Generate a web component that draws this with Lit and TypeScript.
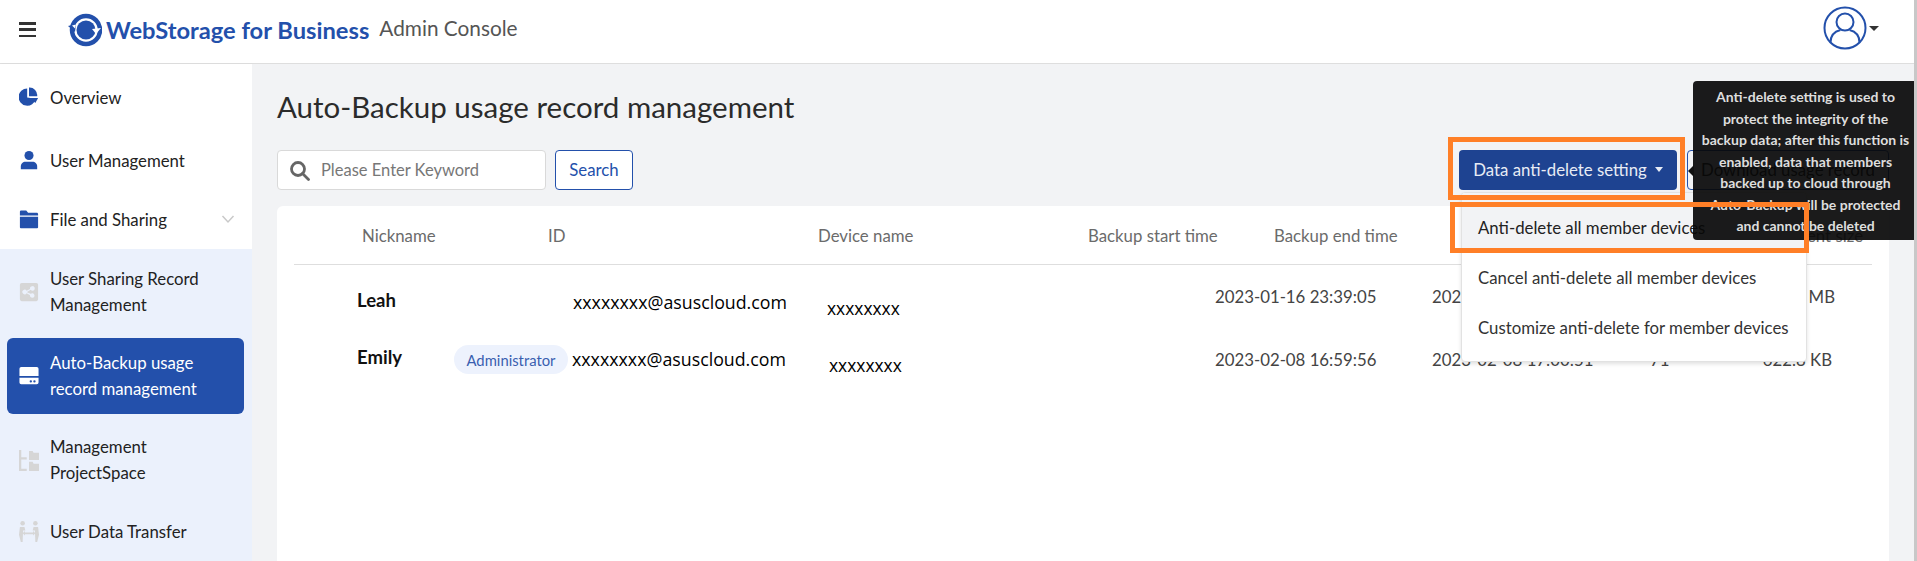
import { LitElement, html, css, svg } from "lit";
import { customElement } from "lit/decorators.js";

const icons: Record<string, any> = {
  pie: svg`<path d="M9 1.500a9.500 9.500 0 1 0 9.300 11.500L9 11.500z"/><path d="M11 0.500a8.500 8.500 0 0 1 9 9.500h-9z"/><path d="M12.500 12h8.500l-3 5.500z"/>`,
  user: svg`<circle cx="11" cy="6" r="5"/><path d="M2 21v-3c0-3 2.500-5 5-5h8c2.500 0 5 2 5 5v3z"/>`,
  folder: svg`<path d="M1 3C1 2 1.700 1.500 2.500 1.500h5.500l2 2.500h9.500c.9 0 1.500.6 1.500 1.500v1.500H1z"/><path d="M1 8.500h20V20c0 .8-.6 1.200-1.500 1.200h-17C1.600 21.200 1 20.800 1 20z"/>`,
  share: svg`<path fill-rule="evenodd" d="M3 1h16a2 2 0 0 1 2 2v16a2 2 0 0 1-2 2H3a2 2 0 0 1-2-2V3a2 2 0 0 1 2-2zm11.500 3.500a2.500 2.500 0 0 0-2.400 3.100L8.400 9.700a2.500 2.500 0 1 0 0 2.600l3.700 2.100a2.500 2.500 0 1 0 .8-1.400L9.200 11.400v-.8l3.700-2.100a2.500 2.500 0 1 0 1.600-4z"/>`,
  drive: svg`<path d="M2.500 1h17a2 2 0 0 1 2 2v8h-21V3a2 2 0 0 1 2-2z"/><path fill-rule="evenodd" d="M.5 13h21v5a2 2 0 0 1-2 2h-17a2 2 0 0 1-2-2zm12.500 2.500a1.300 1.300 0 1 0 0 2.600 1.300 1.300 0 0 0 0-2.600zm4 0a1.300 1.300 0 1 0 0 2.600 1.300 1.300 0 0 0 0-2.600z"/>`,
  tree: svg`<path d="M0 0h2.500v23H0zM2.500 8h6v2.500h-6zM2.500 20.500h6V23h-6z"/><path d="M11 1h4l1 2h6v8H11zM11 13h4l1 2h6v8H11z"/>`,
  transfer: svg`<circle cx="4" cy="2.500" r="2.500"/><circle cx="18" cy="2.500" r="2.500"/><path d="M1 6.500h5l1 4H4.500L4 23H2L0 15zM21 6.500h-5l-1 4h2.500L18 23h2l2-8z"/><path d="M6.500 11l-2.500 2.500L6.500 16v-1.500h9V16l2.500-2.500L15.500 11v1.500h-9z"/>`,
};

@customElement("nav-item")
class NavItem extends LitElement {
  static properties = { icon: {}, active: { type: Boolean, reflect: true }, muted: { type: Boolean, reflect: true }, caret: { type: Boolean } };
  icon = ""; active = false; muted = false; caret = false;
  static styles = css`
    :host { display: flex; align-items: center; box-sizing: border-box; color: #222; font: 16.800px/25.800px Lato, sans-serif; }
    .row { flex: 1; display: flex; align-items: center; gap: 11px; padding-left: 19px; box-sizing: border-box; }
    svg { width: 20px; height: 21px; flex: none; fill: #2350ab; }
    :host([muted]) svg { fill: #d6d6d6; }
    :host([active]) { color: #fff; background: #2350ab; border-radius: 6px; margin: 0 8px 0 7px; }
    :host([active]) .row { padding-left: 12px; }
    :host([active]) svg { fill: #fff; }
    .txt { flex: 1; }
    .chev { width: 14px; height: 14px; fill: none; stroke: #c9c9c9; stroke-width: 1.500; margin-right: 17px; }
  `;
  render() {
    return html`<div class="row"><svg viewBox="0 0 22 23">${icons[this.icon]}</svg><div class="txt"><slot></slot></div>${this.caret ? html`<svg class="chev" viewBox="0 0 14 14"><path d="M1.500 4l5.500 6 5.500-6"/></svg>` : ""}</div>`;
  }
}

@customElement("app-root")
class AppRoot extends LitElement {
  static styles = css`
    :host { display: block; width: 1917px; height: 561px; overflow: hidden; position: relative; background: #fff; font-family: Lato, sans-serif; color: #333; }
    header { height: 64px; box-sizing: border-box; display: flex; align-items: center; border-bottom: 1px solid #dedede; padding-left: 19px; }
    .burger { width: 17px; height: 15px; display: flex; flex-direction: column; justify-content: space-between; margin-right: 32px; margin-bottom: 4px; }
    .burger i { display: block; height: 2.500px; background: #333; }
    .logo { width: 34px; height: 34px; margin-right: 4px; margin-bottom: 3px; flex: none; }
    .brand { font: 700 23.700px "Lato", sans-serif; color: #2350ab; margin-right: 10px; margin-bottom: 4px; white-space: nowrap; }
    .console { font: 20.800px Lato, sans-serif; color: #555; padding-bottom: 9px; white-space: nowrap; }
    .account { margin-left: auto; margin-right: 38px; margin-bottom: 7px; display: flex; align-items: center; gap: 2px; }
    .account svg { width: 44px; height: 44px; display: block; }
    .caret { width: 0; height: 0; border: 4px solid transparent; border-top: 5px solid #333; border-bottom: 0; }
    .account .caret { border-left-width: 5px; border-right-width: 5px; }
    .body { display: flex; height: 497px; }
    aside { width: 252px; flex: none; background: #fff; display: flex; flex-direction: column; box-shadow: 1px 0 2px rgba(0,0,0,.03); }
    .top { display: grid; grid-template-rows: 68px 58px 59px; height: 185px; background: #fff; }
    .sub { flex: 1; background: #ebf1fc; display: grid; grid-template-rows: 89px 76px 92px 52px; align-content: start; }
    .sub nav-item:first-child { padding-bottom: 3px; }
    main { flex: 1; background: #f2f3f5; padding: 0 28px 0 25px; display: flex; flex-direction: column; min-width: 0; }
    h1 { margin: 23px 0 0; height: 40px; font: 400 29.500px/40px Lato, sans-serif; color: #2b2b2b; white-space: nowrap; }
    .tools { display: flex; align-items: center; margin-top: 23px; height: 40px; }
    .search { width: 269px; height: 40px; box-sizing: border-box; border: 1px solid #d9d9d9; border-radius: 4px; background: #fff; display: flex; align-items: center; padding: 0 0 1px 11px; gap: 11px; color: #777; font-size: 16.500px; }
    .search svg { width: 21px; height: 21px; fill: none; stroke: #666; stroke-width: 2.800; margin-top: 1px; }
    .btn { height: 40px; box-sizing: border-box; border-radius: 4px; font: 16.800px Lato, sans-serif; display: flex; align-items: center; justify-content: center; white-space: nowrap; padding-bottom: 2px; }
    .outline { border: 1px solid #2350ab; color: #2350ab; background: #fff; width: 78px; margin-left: 9px; }
    .primary { margin-left: auto; width: 218px; background: #1e4391; color: #e8ecf5; gap: 8px; }
    .primary .caret { border-top-color: #e8ecf5; }
    .dl { margin-left: 10px; width: 202px; border: 1px solid #2350ab; color: #222; background: transparent; }
    .card { flex: 1; margin-top: 16px; background: #fff; border-radius: 6px 6px 0 0; padding: 0 17px; position: relative; }
    .thead { height: 58px; display: grid; grid-template-columns: 186px 270px 270px 186px 1fr auto; padding-left: 68px; align-items: center; color: #6b6b6b; font-size: 16.800px; border-bottom: 1px solid #dedede; white-space: nowrap; }
    .thead .last { padding-right: 9px; }
    .trow { display: grid; grid-template-columns: 160px 119px 254px 388px 217px 218px 100px 1fr; font-size: 16.800px; color: #444; white-space: nowrap; line-height: 26px; align-items: start; }
    .r1 { height: 62px; }
    .r2 { height: 64px; }
    .name { font: 700 18.500px/26px Lato, sans-serif; color: #111; padding-left: 63px; }
    .email { font: 500 17.800px/26px "Open Sans", sans-serif; color: #000; }
    .dev { font: 500 17.400px/26px "Open Sans", sans-serif; color: #000; }
    .r1 .name { padding-top: 22px; }
    .r2 .name { padding-top: 17px; }
    .r1 .email { padding-top: 24px; }
    .r2 .email { padding-top: 19px; margin-left: -1px; }
    .r1 .dev { padding-top: 30px; }
    .r2 .dev { padding-top: 25px; margin-left: 2px; }
    .r1 .t { padding-top: 19px; }
    .r2 .t { padding-top: 20px; }
    .trow .size { text-align: right; padding-right: 37px; }
    .r2 .size { padding-right: 40px; }
    .badge { margin-top: 18px; height: 29px; width: 114px; border-radius: 15px; background: #edf2fd; color: #3a5fb0; font-size: 14.800px; display: flex; align-items: center; justify-content: center; }
    .menu { position: absolute; left: 1461px; top: 192px; width: 346px; height: 170px; box-sizing: border-box; background: #fff; border: 1px solid #e2e2e2; border-radius: 4px; box-shadow: 0 2px 4px rgba(0,0,0,.12); font-size: 16.800px; color: #333; display: grid; grid-template-rows: 60px 50px 50px; overflow: hidden; }
    .menu div { display: flex; align-items: center; padding: 0 0 2px 16px; white-space: nowrap; }
    .menu .hover { background: #f2f3f5; color: #222; padding: 8px 0 0 16px; box-sizing: border-box; }
    .tip { position: absolute; left: 1693px; top: 81px; width: 221px; height: 159px; box-sizing: border-box; padding: 5px 2px 0 6px; background: rgba(8,8,8,.92); border-radius: 4px 0 0 4px; color: #dedede; font: 700 14px/21.500px Lato, sans-serif; text-align: center; }
    .tip::before { content: ""; position: absolute; left: -5px; top: 84px; border: 6px solid transparent; border-left: 0; border-right-color: #111; }
    .mark { position: absolute; box-sizing: border-box; border: 5px solid #ff7f27; pointer-events: none; }
    .m1 { left: 1448px; top: 137px; width: 237px; height: 63px; }
    .m2 { left: 1450px; top: 202px; width: 359px; height: 51px; }
    .scroll { position: absolute; right: 0; top: 0; width: 3px; height: 100%; background: #c8c8c8; }
  `;
  render() {
    return html`
      <header>
        <div class="burger"><i></i><i></i><i></i></div>
        <svg class="logo" viewBox="0 0 34 34">
          <circle cx="18" cy="17" r="14" fill="none" stroke="#2350ab" stroke-width="4.500"/>
          <circle cx="18" cy="17" r="9.500" fill="#2350ab"/>
          <path d="M0 13l8-2-1 8z" fill="#2350ab"/>
          <path d="M4 12.500l4-1-1 4z" fill="#fff"/>
          <path d="M33 15l-5 6-4-5z" fill="#fff"/>
        </svg>
        <span class="brand">WebStorage for Business</span>
        <span class="console">Admin Console</span>
        <div class="account">
          <svg viewBox="0 0 44 44" fill="none" stroke="#2350ab" stroke-width="2">
            <circle cx="22" cy="22" r="20.500"/>
            <circle cx="22" cy="16" r="8.500"/>
            <path d="M7.500 36.500c0-7 4-11 10-12.500M36.500 36.500c0-7-4-11-10-12.500"/>
          </svg>
          <span class="caret"></span>
        </div>
      </header>
      <div class="body">
        <aside>
          <div class="top">
            <nav-item icon="pie">Overview</nav-item>
            <nav-item icon="user">User Management</nav-item>
            <nav-item icon="folder" caret>File and Sharing</nav-item>
          </div>
          <div class="sub">
            <nav-item icon="share" muted>User Sharing Record<br>Management</nav-item>
            <nav-item icon="drive" active>Auto-Backup usage<br>record management</nav-item>
            <nav-item icon="tree" muted>Management<br>ProjectSpace</nav-item>
            <nav-item icon="transfer" muted>User Data Transfer</nav-item>
          </div>
        </aside>
        <main>
          <h1>Auto-Backup usage record management</h1>
          <div class="tools">
            <div class="search">
              <svg viewBox="0 0 21 21"><circle cx="9" cy="9" r="6.500"/><path d="M13.500 13.500l6 6" stroke-linecap="round"/></svg>
              <span>Please Enter Keyword</span>
            </div>
            <div class="btn outline">Search</div>
            <div class="btn primary">Data anti-delete setting <span class="caret"></span></div>
            <div class="btn dl">Download usage record</div>
          </div>
          <div class="card">
            <div class="thead">
              <div>Nickname</div><div>ID</div><div>Device name</div><div>Backup start time</div><div>Backup end time</div><div class="last">Backup content size</div>
            </div>
            <div class="trow r1">
              <div class="name">Leah</div>
              <div></div>
              <div class="email">xxxxxxxx@asuscloud.com</div>
              <div class="dev">xxxxxxxx</div>
              <div class="t">2023-01-16 23:39:05</div>
              <div class="t">2023-01-16 23:45:12</div>
              <div class="t">128</div>
              <div class="t size">1.8 MB</div>
            </div>
            <div class="trow r2">
              <div class="name">Emily</div>
              <div><span class="badge">Administrator</span></div>
              <div class="email">xxxxxxxx@asuscloud.com</div>
              <div class="dev">xxxxxxxx</div>
              <div class="t">2023-02-08 16:59:56</div>
              <div class="t">2023-02-08 17:00:51</div>
              <div class="t">71</div>
              <div class="t size">622.8 KB</div>
            </div>
          </div>
        </main>
      </div>
      <div class="menu">
        <div class="hover">Anti-delete all member devices</div>
        <div>Cancel anti-delete all member devices</div>
        <div>Customize anti-delete for member devices</div>
      </div>
      <div class="tip">Anti-delete setting is used to protect the integrity of the backup data; after this function is enabled, data that members backed up to cloud through<br>Auto-Backup will be protected<br>and cannot be deleted</div>
      <div class="mark m1"></div>
      <div class="mark m2"></div>
      <div class="scroll"></div>
    `;
  }
}
